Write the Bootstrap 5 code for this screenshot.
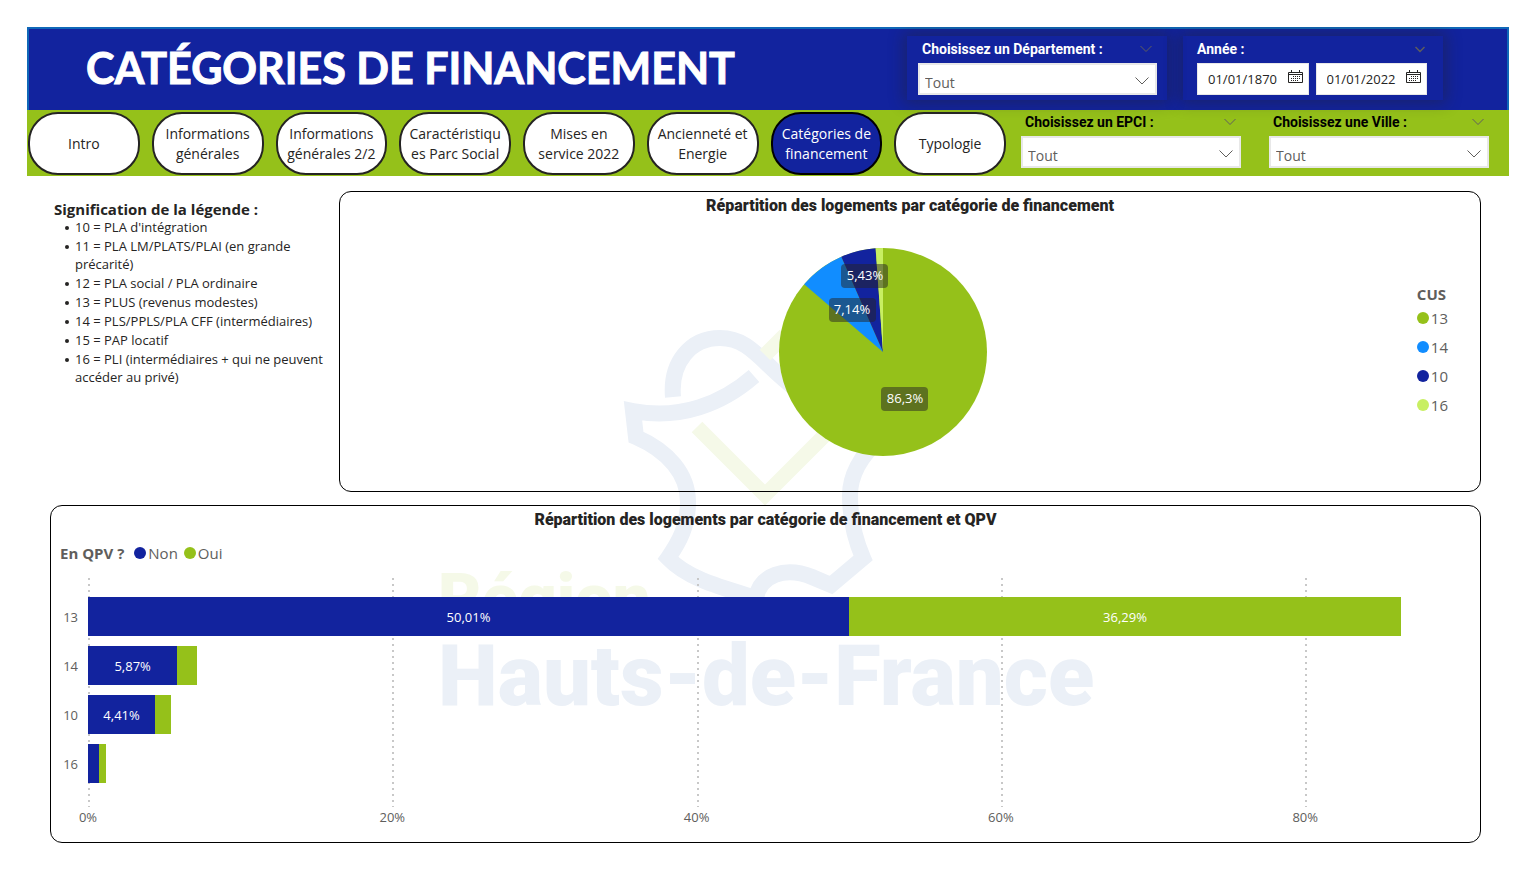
<!DOCTYPE html>
<html lang="fr">
<head>
<meta charset="utf-8">
<meta name="viewport" content="width=device-width, initial-scale=1">
<title>Catégories de financement</title>
<link href="https://cdn.jsdelivr.net/npm/bootstrap@5.3.0/dist/css/bootstrap.min.css" rel="stylesheet">
<style>
  :root { --bleu:#12239e; --vert:#95c11a; --azur:#118dff; --anis:#c8ef62; --encre:#252423; --gris:#605e5c; }
  body { font-family:"Open Sans","Noto Sans",sans-serif; font-size:14px; line-height:20px; color:var(--encre); padding:27px; background:#fff; }
  .banner { background:var(--bleu); border:2px solid #1068b8; border-bottom:0; min-height:83px; padding:7px 64px 8px 57px; clip-path:inset(0 0 -20px 0); }
  .banner h1 { font-family:Lato,"Open Sans",sans-serif; font-size:43px; line-height:64px; font-weight:700; color:#fff; -webkit-text-stroke:1px #fff; }
  .slicer { width:260px; padding:3px 10px 5px 11px; box-shadow:0 0 14px 3px rgba(37,36,35,.4); }
  .slicer-period { padding-left:14px; padding-right:16px; }
  .slicer-label { font-family:Roboto,sans-serif; font-size:14px; line-height:20px; font-weight:700; }
  .fold { width:14px; height:14px; padding:0; border:0; background:none; color:var(--gris); display:flex; align-items:center; justify-content:center; }
  .form-select, .date-box { height:32px; border:2px solid #e8e8e8; border-radius:0; background-color:#fff; color:var(--gris); font-size:14px; line-height:20px; padding:8px 30px 0 5px; }
  .form-select { background-image:url("data:image/svg+xml,%3Csvg xmlns='http://www.w3.org/2000/svg' viewBox='0 0 14 8'%3E%3Cpath d='M.5.5 7 7 13.5.5' fill='none' stroke='%23605e5c'/%3E%3C/svg%3E"); background-size:14px 8px; background-position:right 6px top 12px; }
  .date-box { border-width:1px; padding:0 5px 0 10px; color:var(--encre); }
  .date-box input { border:0; padding:0; min-width:0; width:100%; font-size:13px; color:inherit; background:none; }
  .date-pair { gap:7px; }
  .tabs-bar { background:var(--vert); min-height:66px; padding:2px 20px 0 1px; gap:15px; }
  .tab-list { gap:12px; flex:1 1 0; min-width:0; }
  .tab-pill { height:63px; padding:1px 6px 0; border:2px solid var(--encre); border-radius:30px; background:#fff; color:var(--encre); font-size:14px; line-height:20px; text-decoration:none; flex:1 1 0; min-width:0; overflow-wrap:anywhere; }
  .tab-pill.active { background:var(--bleu); border-color:#000; color:#fff; }
  .place-list { gap:28px; }
  .place-slicer { width:220px; }
  .board { padding:15px 28px 0 23px; }
  .legend-note { width:289px; padding:9px 0 0 4px; font-size:13px; line-height:18px; }
  .legend-note h2 { font-size:15px; line-height:18px; font-weight:700; margin:0; }
  .legend-note ul { padding-left:21px; margin:0; list-style:none; }
  .legend-note li { margin-bottom:1px; position:relative; }
  .legend-note li::before { content:""; position:absolute; left:-10px; top:8px; width:4px; height:4px; border-radius:50%; background:var(--encre); }
  .panel { border:1px solid #000; border-radius:12px; position:relative; z-index:1; }
  .panel h2 { font-family:Roboto,sans-serif; font-size:16px; line-height:20px; font-weight:900; margin:4px 0 0; text-align:center; }
  .pie-panel { min-height:301px; }
  .bar-panel { min-height:338px; margin-top:13px; }
  .pie-body { padding:32px 32px 35px 9px; }
  .key { color:var(--gris); font-size:15px; gap:2px; }
  .dot { width:12px; height:12px; border-radius:50%; flex:none; }
  .key-column { padding-bottom:6px; }
  .key-list { gap:9px; }
  .key-item { gap:2px; }
  .bar-key { margin-top:13px; padding-left:9px; }
  .bg-bleu { background:var(--bleu); } .bg-vert { background:var(--vert); } .bg-azur { background:var(--azur); } .bg-anis { background:var(--anis); }
  .watermark { position:absolute; left:50%; top:144px; transform:translateX(-50%); z-index:0; }
  .chart { margin:15px 15px 0 37px; }
  .plot { position:relative; padding:19px 0 22px; height:229px; }
  .grid-line { position:absolute; top:0; bottom:0; width:2px; left:calc(var(--v) * 1% / .905); background:repeating-linear-gradient(#c8c8c8 0 2px, transparent 2px 6px); }
  .bar-row { height:39px; position:relative; margin-bottom:10px; }
  .bar-row .seg { width:calc(var(--v) * 1% / .905); color:#fff; font-size:13px; }
  .cat { position:absolute; right:100%; margin-right:10px; font-size:13px; color:var(--gris); }
  .axis { position:relative; height:20px; font-size:13px; color:var(--gris); }
  .axis span { position:absolute; top:0; left:calc(var(--v) * 1% / .905); transform:translateX(-50%); }
</style>
</head>
<body>
<header>
  <div class="banner d-flex align-items-start justify-content-between position-relative z-1">
    <h1 class="mb-0 text-nowrap">CATÉGORIES DE FINANCEMENT</h1>
    <div class="d-flex gap-3">
      <div class="slicer">
        <div class="d-flex justify-content-between align-items-center mb-1 px-1 text-white">
          <label class="slicer-label" for="dep">Choisissez un Département :</label>
          <button class="fold" type="button" aria-label="Réduire Département"><svg width="12" height="8" viewBox="0 0 12 8" fill="none" stroke="currentColor"><path d="M.5 1 6 6.500 11.500 1"/></svg></button>
        </div>
        <select class="form-select" id="dep"><option>Tout</option></select>
      </div>
      <div class="slicer slicer-period">
        <div class="d-flex justify-content-between align-items-center mb-1 text-white">
          <label class="slicer-label" for="d1">Année :</label>
          <button class="fold" type="button" aria-label="Réduire Année"><svg width="10" height="7" viewBox="0 0 10 7" fill="none" stroke="currentColor" stroke-width="1.500"><path d="M.5 1 5 5.500 9.500 1"/></svg></button>
        </div>
        <div class="d-flex date-pair">
          <div class="date-box d-flex align-items-center flex-fill"><input type="text" id="d1" value="01/01/1870">
            <svg class="flex-shrink-0 mb-1" width="15" height="14" viewBox="0 0 15 14" fill="none" stroke="#252423"><path d="M.5 2.500h14v10H.5zM.5 4.500h14M3.500 0v3M11.500 0v3"/><path d="M5 6.500h8M3 8.500h10M3 10.500h7" stroke-dasharray="1 1"/></svg></div>
          <div class="date-box d-flex align-items-center flex-fill"><input type="text" aria-label="Date de fin" value="01/01/2022">
            <svg class="flex-shrink-0 mb-1" width="15" height="14" viewBox="0 0 15 14" fill="none" stroke="#252423"><path d="M.5 2.500h14v10H.5zM.5 4.500h14M3.500 0v3M11.500 0v3"/><path d="M5 6.500h8M3 8.500h10M3 10.500h7" stroke-dasharray="1 1"/></svg></div>
        </div>
      </div>
    </div>
  </div>
  <div class="tabs-bar d-flex align-items-start">
    <nav class="d-flex tab-list" aria-label="Pages">
      <a href="#" class="tab-pill d-flex align-items-center justify-content-center text-center">Intro</a>
      <a href="#" class="tab-pill d-flex align-items-center justify-content-center text-center">Informations générales</a>
      <a href="#" class="tab-pill d-flex align-items-center justify-content-center text-center">Informations générales 2/2</a>
      <a href="#" class="tab-pill d-flex align-items-center justify-content-center text-center">Caractéristiques Parc Social</a>
      <a href="#" class="tab-pill d-flex align-items-center justify-content-center text-center">Mises en service 2022</a>
      <a href="#" class="tab-pill d-flex align-items-center justify-content-center text-center">Ancienneté et Energie</a>
      <a href="#" class="tab-pill active d-flex align-items-center justify-content-center text-center" aria-current="page">Catégories de financement</a>
      <a href="#" class="tab-pill d-flex align-items-center justify-content-center text-center">Typologie</a>
    </nav>
    <div class="d-flex place-list">
      <div class="place-slicer">
        <div class="d-flex justify-content-between align-items-center px-1 mb-1">
          <label class="slicer-label text-black" for="epci">Choisissez un EPCI :</label>
          <button class="fold" type="button" aria-label="Réduire EPCI"><svg width="12" height="8" viewBox="0 0 12 8" fill="none" stroke="currentColor"><path d="M.5 1 6 6.500 11.500 1"/></svg></button>
        </div>
        <select class="form-select" id="epci"><option>Tout</option></select>
      </div>
      <div class="place-slicer">
        <div class="d-flex justify-content-between align-items-center px-1 mb-1">
          <label class="slicer-label text-black" for="ville">Choisissez une Ville :</label>
          <button class="fold" type="button" aria-label="Réduire Ville"><svg width="12" height="8" viewBox="0 0 12 8" fill="none" stroke="currentColor"><path d="M.5 1 6 6.500 11.500 1"/></svg></button>
        </div>
        <select class="form-select" id="ville"><option>Tout</option></select>
      </div>
    </div>
  </div>
</header>

<main class="board position-relative">
  <svg class="watermark" width="680" height="420" viewBox="428 320 680 420" fill="none" aria-hidden="true">
    <g stroke="#ebf0f7" stroke-width="16">
      <path d="M673 397C670 362 691 338 720 338C752 338 762 365 800 392"/>
      <path d="M754 376C722 404 680 420 633 411L636 437C668 451 688 474 688 502C688 525 680 541 668 558C688 579 720 587 756 598C760 575 785 566 812 577L831 585L863 558C853 535 850 515 850 495C850 477 860 455 880 440"/>
    </g>
    <path d="M697 427 765 495 840 420M765 355l20-20" stroke="#f5f9e8" stroke-width="15"/>
    <g font-family="Roboto, sans-serif" font-weight="900">
      <text x="438" y="621" font-size="67" fill="#f5f9e8">Région</text>
      <text x="438" y="705" font-size="85" fill="#ebf0f7">Hauts-de-France</text>
    </g>
  </svg>

  <div class="d-flex">
    <section class="legend-note flex-shrink-0">
      <h2>Signification de la légende :</h2>
      <ul>
        <li>10 = PLA d'intégration</li>
        <li>11 = PLA LM/PLATS/PLAI (en grande précarité)</li>
        <li>12 = PLA social / PLA ordinaire</li>
        <li>13 = PLUS (revenus modestes)</li>
        <li>14 = PLS/PPLS/PLA CFF (intermédiaires)</li>
        <li>15 = PAP locatif</li>
        <li>16 = PLI (intermédiaires + qui ne peuvent accéder au privé)</li>
      </ul>
    </section>
    <section class="panel pie-panel flex-fill">
      <h2>Répartition des logements par catégorie de financement</h2>
      <div class="pie-body d-flex align-items-center">
        <div class="flex-fill text-center">
          <svg class="d-block mx-auto" width="208" height="208" viewBox="-104 -104 208 208" role="img" aria-label="Répartition par catégorie de financement">
            <circle r="104" fill="#95c11a"/>
            <path id="s14" fill="#118dff"/><path id="s10" fill="#12239e"/><path id="s16" fill="#c8ef62"/>
            <g fill="#252423" fill-opacity=".5"><rect x="-42" y="-88" width="47" height="24" rx="4"/><rect x="-54" y="-54" width="47" height="24" rx="4"/><rect x="-2" y="35" width="47" height="24" rx="4"/></g>
            <g fill="#fff" font-size="13" text-anchor="middle"><text x="-18" y="-72">5,43%</text><text x="-31" y="-38">7,14%</text><text x="22" y="51">86,3%</text></g>
          </svg>
        </div>
        <div class="key key-column">
          <div class="fw-bold mb-1">CUS</div>
          <div class="d-flex flex-column key-list">
            <div class="d-flex align-items-center key-item"><span class="dot bg-vert"></span>13</div>
            <div class="d-flex align-items-center key-item"><span class="dot bg-azur"></span>14</div>
            <div class="d-flex align-items-center key-item"><span class="dot bg-bleu"></span>10</div>
            <div class="d-flex align-items-center key-item"><span class="dot bg-anis"></span>16</div>
          </div>
        </div>
      </div>
    </section>
  </div>

  <section class="panel bar-panel">
    <h2>Répartition des logements par catégorie de financement et QPV</h2>
    <div class="key d-flex align-items-center bar-key">
      <strong class="me-2">En QPV ?</strong>
      <span class="dot bg-bleu"></span><span class="me-1">Non</span>
      <span class="dot bg-vert"></span><span>Oui</span>
    </div>
    <div class="chart">
      <div class="plot">
        <div class="grid-line" style="--v:0"></div><div class="grid-line" style="--v:20"></div><div class="grid-line" style="--v:40"></div><div class="grid-line" style="--v:60"></div><div class="grid-line" style="--v:80"></div>
        <div class="bar-row d-flex align-items-center"><span class="cat">13</span><div class="seg bg-bleu h-100 d-flex align-items-center justify-content-center" style="--v:50.01">50,01%</div><div class="seg bg-vert h-100 d-flex align-items-center justify-content-center" style="--v:36.29">36,29%</div></div>
        <div class="bar-row d-flex align-items-center"><span class="cat">14</span><div class="seg bg-bleu h-100 d-flex align-items-center justify-content-center" style="--v:5.87">5,87%</div><div class="seg bg-vert h-100" style="--v:1.27"></div></div>
        <div class="bar-row d-flex align-items-center"><span class="cat">10</span><div class="seg bg-bleu h-100 d-flex align-items-center justify-content-center" style="--v:4.41">4,41%</div><div class="seg bg-vert h-100" style="--v:1.02"></div></div>
        <div class="bar-row d-flex align-items-center"><span class="cat">16</span><div class="seg bg-bleu h-100" style="--v:.75"></div><div class="seg bg-vert h-100" style="--v:.45"></div></div>
      </div>
      <div class="axis"><span style="--v:0">0%</span><span style="--v:20">20%</span><span style="--v:40">40%</span><span style="--v:60">60%</span><span style="--v:80">80%</span></div>
    </div>
  </section>
</main>
<script src="https://cdn.jsdelivr.net/npm/bootstrap@5.3.0/dist/js/bootstrap.bundle.min.js"></script>
<script>
  // Pie slices, clockwise from the top, as shares of the total
  const R = 104;
  const pt = s => `${R * Math.sin(2 * Math.PI * s)} ${-R * Math.cos(2 * Math.PI * s)}`;
  [['s14', .863, .9344], ['s10', .9344, .9887], ['s16', .9887, 1]].forEach(([id, a, b]) =>
    document.getElementById(id).setAttribute('d', `M0 0L${pt(a)}A${R} ${R} 0 0 1 ${pt(b)}Z`));
</script>
</body>
</html>
